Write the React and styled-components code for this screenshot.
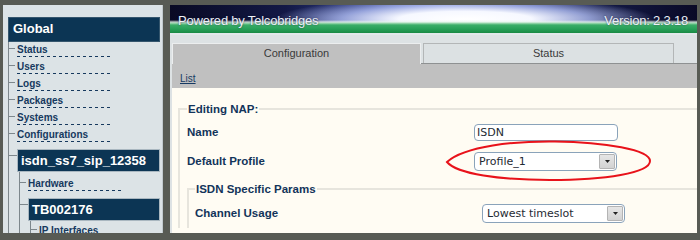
import React from "react";
import styled, { createGlobalStyle } from "styled-components";

const GlobalStyle = createGlobalStyle`
  html, body {
    margin: 0;
    padding: 0;
    height: 233px;
    overflow: hidden;
    background: #585b54;
  }
  * { box-sizing: border-box; }
`;

// page -----------------
const Page = styled.div`
  display: flex;
  gap: 7px;
  height: 233px;
  padding: 5px 3px 0 3px;
  font-family: "Liberation Sans", Arial, sans-serif;
`;

// sidebar tree -----------------
const Sidebar = styled.div`
  width: 160px;
  flex: none;
  background: #dce3e6;
  border-right: 1px solid #c2cace;
  padding: 12px 2px 0 5px;
  overflow: hidden;
`;

const NavHeader = styled.div`
  height: ${(p) => (p.$sub ? "23px" : "25px")};
  margin: ${(p) => (p.$sub ? "0 0 0 8px" : "0")};
  background: #0c3554;
  border: 1px solid ${(p) => (p.$sub ? "#a9b7c0" : "#35566d")};
  color: #ffffff;
  font-weight: bold;
  font-size: 13px;
  line-height: 21px;
  padding-left: ${(p) => (p.$sub ? "3px" : "4px")};
  white-space: nowrap;
`;

const Tree = styled.div`
  border-left: 1px solid #7d878c;
  margin-left: ${(p) => p.$indent || 0}px;
  padding-top: ${(p) => p.$top || 0}px;
  padding-bottom: 40px;
`;

const Item = styled.div`
  position: relative;
  padding: 1px 0 0 8px;
  margin-bottom: 2px;
  &::before {
    content: "";
    position: absolute;
    left: 0;
    top: 6px;
    width: 6px;
    border-top: 1px solid #7d878c;
  }
`;

const NavLink = styled.span`
  display: block;
  width: 96px;
  font-size: 10px;
  font-weight: bold;
  line-height: 13px;
  padding-bottom: 1px;
  color: #16395e;
  white-space: nowrap;
  background: linear-gradient(90deg, #16395e 0 3px, transparent 3px) repeat-x left bottom / 6px 1px;
`;

const Branch = styled.div`
  position: relative;
  margin-top: ${(p) => p.$top}px;
  &::before {
    content: "";
    position: absolute;
    left: 0;
    top: 6px;
    width: 8px;
    border-top: 1px solid #7d878c;
  }
`;

// main -----------------
const Main = styled.div`
  flex: 1;
  min-width: 0;
  display: flex;
  flex-direction: column;
  background: #dde2e4;
  overflow: hidden;
`;

const Banner = styled.div`
  height: 30px;
  flex: none;
  display: flex;
  justify-content: space-between;
  align-items: flex-start;
  padding: 8px 9px 0 8px;
  color: #edf1f7;
  font-size: 13px;
  letter-spacing: -0.2px;
  text-shadow: 0 0 2px rgba(10, 20, 50, 0.7);
  background:
    linear-gradient(180deg, transparent 0, transparent 28px, #e2e8ea 28px),
    linear-gradient(180deg, transparent 0, transparent 15px, rgba(230, 245, 236, 0.8) 17px, #a5dcb6 18px, #3aae68 20px, #27a058 24px, #1a8a44 28px),
    radial-gradient(190px 22px at 56% 14px, #ffffff 0%, #f6f8ff 35%, rgba(175, 188, 240, 0.8) 65%, rgba(90, 105, 190, 0) 100%),
    linear-gradient(90deg, #090a24 0%, #131946 22%, #2f3d8a 38%, #7482cc 52%, #33418e 66%, #131946 82%, #0a0a26 100%);
`;

const Content = styled.div`
  flex: 1;
  display: flex;
  flex-direction: column;
  padding-left: 2px;
`;

const TabStrip = styled.div`
  display: flex;
  align-items: flex-end;
  gap: 2px;
  padding-top: 8px;
  border-bottom: 1px solid #8e9192;
`;

const Tab = styled.div`
  position: relative;
  height: ${(p) => (p.$active ? "21px" : "20px")};
  width: ${(p) => (p.$active ? "249px" : "251px")};
  margin-bottom: ${(p) => (p.$active ? "-1px" : "0")};
  background: ${(p) => (p.$active ? "#c0c0c0" : "#dce1e3")};
  border: 1px solid ${(p) => (p.$active ? "#eceeef" : "#b3b6b7")};
  border-bottom: none;
  text-align: center;
  font-size: 11px;
  line-height: 19px;
  color: #3a3a3a;
`;

const SubBar = styled.div`
  height: 24px;
  background: #c0c0c0;
  padding: 4px 0 0 8px;
`;

const ListLink = styled.a`
  font-size: 10px;
  color: #163a62;
  text-decoration: underline;
`;

const Body = styled.div`
  flex: 1;
  background: #fffcf3;
  padding: 14px 0 0 6px;
`;

const Fieldset = styled.fieldset`
  margin: ${(p) => (p.$inner ? "6px 0 0 0" : "0")};
  padding: 0 0 0 ${(p) => (p.$inner ? "6px" : "7px")};
  border: 2px solid #e7e5dd;
  border-right: none;
  border-bottom: none;
  min-width: 0;
`;

const Legend = styled.legend`
  padding: 0 1px;
  font-size: 11.5px;
  font-weight: bold;
  line-height: 14px;
  color: #13345a;
`;

const Row = styled.div`
  display: grid;
  grid-template-columns: 287px auto;
  align-items: center;
  height: 29px;
  margin-top: ${(p) => p.$top || 0}px;
`;

const Label = styled.div`
  font-size: 11.5px;
  font-weight: bold;
  color: #13345a;
  margin-top: -2px;
`;

const TextInput = styled.div`
  width: 144px;
  height: 17px;
  border: 1px solid #8aa3ba;
  border-radius: 4px;
  background: #ffffff;
  padding-left: 2px;
  font-family: "DejaVu Sans", sans-serif;
  font-size: 11px;
  line-height: 15px;
  color: #1f2a33;
`;

const SelectWrap = styled.div`
  position: relative;
  width: 143px;
`;

const SelectBox = styled.div`
  display: flex;
  align-items: center;
  justify-content: space-between;
  width: 143px;
  height: 19px;
  border: 1px solid #8aa3ba;
  border-radius: 4px;
  background: #ffffff;
  padding: 0 1px 0 4px;
  font-family: "DejaVu Sans", sans-serif;
  font-size: 11px;
  color: #1f2a33;
`;

const ArrowButton = styled.div`
  width: 16px;
  height: 15px;
  display: flex;
  align-items: center;
  justify-content: center;
  background: linear-gradient(#e6e6e6, #d2d2d2);
  border: 1px solid #b4b4b4;
  border-radius: 1px;
`;

const Ellipse = styled.svg`
  position: absolute;
  left: -29px;
  top: -12px;
  pointer-events: none;
`;

const Select = ({ value, circled }) => (
  <SelectWrap>
    <SelectBox>
      <span>{value}</span>
      <ArrowButton>
        <svg width="5" height="3" viewBox="0 0 5 3">
          <path d="M0 0 L5 0 L2.5 3 Z" fill="#222" />
        </svg>
      </ArrowButton>
    </SelectBox>
    {circled && (
      <Ellipse width="208" height="42" viewBox="0 0 208 42">
        <path
          d="M2 22 C 20 6, 70 1, 110 1.5 C 160 2, 205 10, 205 21 C 205 33, 160 40, 105 40 C 55 40, 12 34, 2 22 Z"
          fill="none"
          stroke="#e8121a"
          strokeWidth="2"
        />
      </Ellipse>
    )}
  </SelectWrap>
);

const navItems = ["Status", "Users", "Logs", "Packages", "Systems", "Configurations"];

const App = () => {
  return (
    <>
      <GlobalStyle />
      <Page>
        <Sidebar>
          <NavHeader>Global</NavHeader>
          <Tree>
            {navItems.map((name) => (
              <Item key={name}>
                <NavLink>{name}</NavLink>
              </Item>
            ))}
            <Branch $top={7}>
              <NavHeader $sub>isdn_ss7_sip_12358</NavHeader>
              <Tree $indent={10} $top={4}>
                <Item>
                  <NavLink>Hardware</NavLink>
                </Item>
                <Branch $top={7}>
                  <NavHeader $sub>TB002176</NavHeader>
                  <Tree $indent={10} $top={2}>
                    <Item>
                      <NavLink>IP Interfaces</NavLink>
                    </Item>
                  </Tree>
                </Branch>
              </Tree>
            </Branch>
          </Tree>
        </Sidebar>

        <Main>
          <Banner>
            <span>Powered by Telcobridges</span>
            <span>Version: 2.3.18</span>
          </Banner>
          <Content>
            <TabStrip>
              <Tab $active>Configuration</Tab>
              <Tab>Status</Tab>
            </TabStrip>
            <SubBar>
              <ListLink>List</ListLink>
            </SubBar>
            <Body>
              <Fieldset>
                <Legend>Editing NAP:</Legend>
                <Row $top={2}>
                  <Label>Name</Label>
                  <TextInput>ISDN</TextInput>
                </Row>
                <Row>
                  <Label>Default Profile</Label>
                  <Select value="Profile_1" circled />
                </Row>
                <Fieldset $inner>
                  <Legend>ISDN Specific Params</Legend>
                  <Row $top={3}>
                    <Label>Channel Usage</Label>
                    <Select value="Lowest timeslot" />
                  </Row>
                </Fieldset>
              </Fieldset>
            </Body>
          </Content>
        </Main>
      </Page>
    </>
  );
};

export default App;
